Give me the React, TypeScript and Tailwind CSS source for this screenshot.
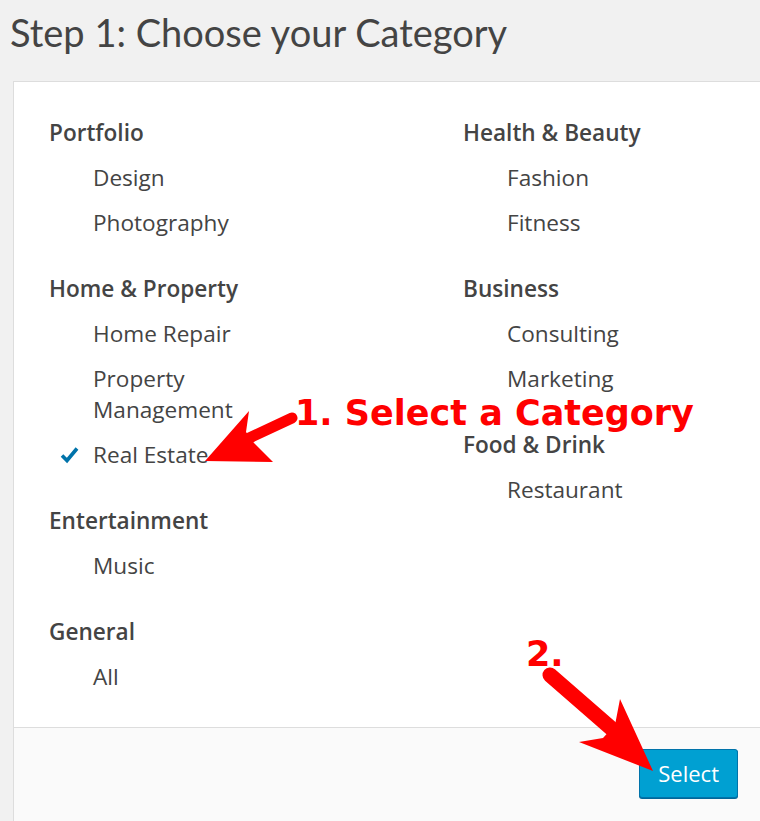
import React from 'react'

type Group = { title: string; items: string[] }

const leftGroups: Group[] = [
  { title: 'Portfolio', items: ['Design', 'Photography'] },
  { title: 'Home & Property', items: ['Home Repair', 'Property Management', 'Real Estate'] },
  { title: 'Entertainment', items: ['Music'] },
  { title: 'General', items: ['All'] },
]

const rightGroups: Group[] = [
  { title: 'Health & Beauty', items: ['Fashion', 'Fitness'] },
  { title: 'Business', items: ['Consulting', 'Marketing'] },
  { title: 'Food & Drink', items: ['Restaurant'] },
]

const selected = 'Real Estate'

const Check = () => (
  <svg width="20" height="18" viewBox="0 0 20 18" className="absolute left-[-33px] top-[7px]">
    <path d="M2 9.5 L7 14.5 L17 2.5" fill="none" stroke="#0073aa" strokeWidth="3.6" strokeLinecap="butt" strokeLinejoin="miter" />
  </svg>
)

const Column = ({ groups, width }: { groups: Group[]; width: string }) => (
  <div className={`flex flex-col gap-[35px] ${width}`}>
    {groups.map((g) => (
      <div key={g.title} className="flex flex-col gap-[14px]">
        <div className="font-semibold text-[#444]">{g.title}</div>
        {g.items.map((item) => (
          <div key={item} className="relative ml-[44px] max-w-[190px] text-[#444]">
            {item === selected && <Check />}
            {item}
          </div>
        ))}
      </div>
    ))}
  </div>
)

export default function App() {
  return (
    <div className="relative min-h-[821px] w-[760px] overflow-hidden bg-[#f1f1f1] font-['Open_Sans',sans-serif]">
      <h1 className="pl-[10px] pt-[10px] font-['Lato',sans-serif] text-[38px] leading-[44px] text-[#444]">
        Step 1: Choose your Category
      </h1>

      <div className="ml-[13px] mt-[27px] w-[760px] border border-[#ddd] bg-white">
        <div className="flex px-[35px] pb-[35px] pt-[35px] text-[22.6px] leading-[31px]">
          <Column groups={leftGroups} width="w-[414px]" />
          <Column groups={rightGroups} width="w-[260px]" />
        </div>
        <div className="flex justify-end border-t border-[#ddd] bg-[#fafafa] pb-[60px] pr-[34px] pt-[21px]">
          <button className="rounded-[3px] border border-[#0073aa] bg-[#00a0d2] px-[18px] py-[8px] text-[22px] leading-[31px] text-white shadow-[0_1px_0_#006799]">
            Select
          </button>
        </div>
      </div>

      {/* annotations */}
      <svg className="pointer-events-none absolute left-0 top-0" width="760" height="821" viewBox="0 0 760 821">
        <line x1="292" y1="418" x2="245" y2="440" stroke="#ff0000" strokeWidth="11" strokeLinecap="round" />
        <polygon points="205,461 249,411 246,432 254,443 273,462" fill="#ff0000" />
        <line x1="550" y1="675" x2="612" y2="729" stroke="#ff0000" strokeWidth="15" strokeLinecap="round" />
        <polygon points="653,771 620,699 615,725 603,738 579,742" fill="#ff0000" />
      </svg>
      <span className="pointer-events-none absolute left-[295px] top-[396px] font-['DejaVu_Sans',sans-serif] text-[35px] font-bold leading-[35px] text-[#ff0000]">
        1. Select a Category
      </span>
      <span className="pointer-events-none absolute left-[526px] top-[637px] font-['DejaVu_Sans',sans-serif] text-[35px] font-bold leading-[35px] text-[#ff0000]">
        2.
      </span>
    </div>
  )
}
